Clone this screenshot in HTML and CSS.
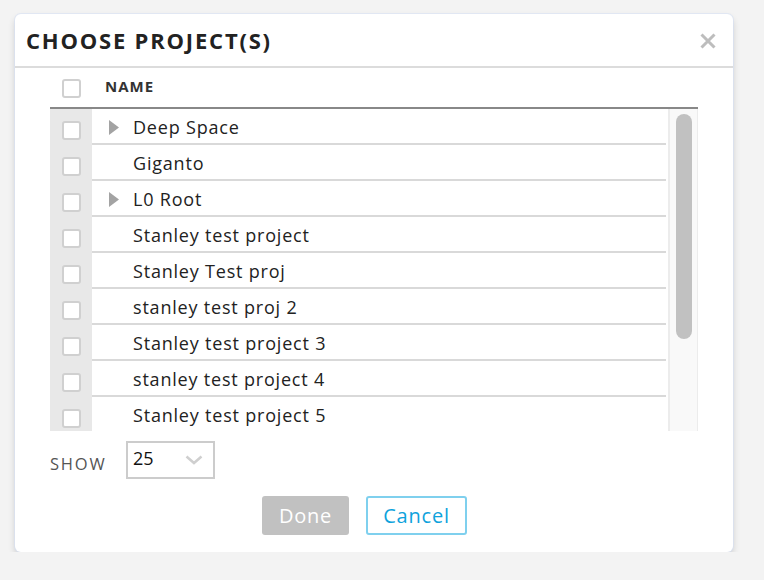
FILE: index.html
```html
<!DOCTYPE html>
<html>
<head>
<meta charset="utf-8">
<link rel="stylesheet" href="styles.css">
</head>
<body>
<div class="dialog">
  <div class="dlg-head">
    <h1 class="dlg-title">CHOOSE PROJECT(S)</h1>
    <span class="dlg-close"><svg width="16" height="16" viewBox="0 0 16 16"><path d="M1.5 1.5 L14.5 14.5 M14.5 1.5 L1.5 14.5" stroke="#bdbdbd" stroke-width="3"/></svg></span>
  </div>
  <div class="dlg-body">
    <div class="thead">
      <div class="col-check"><span class="cb"></span></div>
      <div class="th-name">NAME</div>
    </div>
    <div class="scroller">
      <div class="rows">
        <div class="row"><div class="col-check"><span class="cb"></span></div><div class="name"><span class="toggle"><svg width="10" height="15" viewBox="0 0 10 15"><path d="M0 0 L10 7.5 L0 15 Z" fill="#a3a3a3"/></svg></span>Deep Space</div></div>
        <div class="row"><div class="col-check"><span class="cb"></span></div><div class="name"><span class="toggle"></span>Giganto</div></div>
        <div class="row"><div class="col-check"><span class="cb"></span></div><div class="name"><span class="toggle"><svg width="10" height="15" viewBox="0 0 10 15"><path d="M0 0 L10 7.5 L0 15 Z" fill="#a3a3a3"/></svg></span>L0 Root</div></div>
        <div class="row"><div class="col-check"><span class="cb"></span></div><div class="name"><span class="toggle"></span>Stanley test project</div></div>
        <div class="row"><div class="col-check"><span class="cb"></span></div><div class="name"><span class="toggle"></span>Stanley Test proj</div></div>
        <div class="row"><div class="col-check"><span class="cb"></span></div><div class="name"><span class="toggle"></span>stanley test proj 2</div></div>
        <div class="row"><div class="col-check"><span class="cb"></span></div><div class="name"><span class="toggle"></span>Stanley test project 3</div></div>
        <div class="row"><div class="col-check"><span class="cb"></span></div><div class="name"><span class="toggle"></span>stanley test project 4</div></div>
        <div class="row"><div class="col-check"><span class="cb"></span></div><div class="name"><span class="toggle"></span>Stanley test project 5</div></div>
      </div>
      <div class="scrollbar"><div class="thumb"></div></div>
    </div>
    <div class="show">
      <span class="show-label">SHOW</span>
      <div class="select"><span class="select-val">25</span><svg class="chev" width="18" height="10" viewBox="0 0 18 10"><path d="M1.5 1.5 L9 8 L16.5 1.5" fill="none" stroke="#cfcfcf" stroke-width="2.5"/></svg></div>
    </div>
    <div class="actions">
      <button class="btn btn-done">Done</button>
      <button class="btn btn-cancel">Cancel</button>
    </div>
  </div>
</div>
</body>
</html>
```

FILE: styles.css
```css
html, body {
  margin: 0;
  background: #f3f3f3;
}
body {
  padding: 14px 0 0 15px;
  font-family: "Open Sans", "Liberation Sans", sans-serif;
}
.dialog {
  width: 718px;
  height: 538px;
  box-sizing: border-box;
  background: #fff;
  border-radius: 6px;
  box-shadow: 0 0 0 1px rgba(215, 225, 245, 0.6), 0 4px 7px rgba(0, 0, 0, 0.16);
  display: flex;
  flex-direction: column;
}
.dlg-head {
  height: 53px;
  border-bottom: 2px solid #dcdcdc;
  display: flex;
  align-items: center;
  justify-content: space-between;
  padding: 0 17px 0 11px;
}
.dlg-title {
  margin: 0;
  font-family: "Open Sans", sans-serif;
  font-weight: 700;
  font-size: 22px;
  letter-spacing: 1.8px;
  color: #222;
}
.dlg-close {
  display: flex;
  margin-top: 1px;
}
.dlg-body {
  padding: 0 35px 17px 35px;
  display: flex;
  flex-direction: column;
}
.thead {
  height: 39px;
  display: flex;
  align-items: center;
  border-bottom: 2px solid #888;
}
.col-check {
  width: 42px;
  flex: none;
  display: flex;
  justify-content: center;
}
.cb {
  width: 19px;
  height: 19px;
  box-sizing: border-box;
  border: 2px solid #d0d0d0;
  border-radius: 3px;
  background: #fff;
  margin-top: 2px;
}
.th-name {
  padding-left: 13px;
  font-weight: 700;
  font-size: 15px;
  letter-spacing: 1px;
  color: #333;
  margin-top: -4px;
}
.scroller {
  display: flex;
  height: 322px;
  overflow: hidden;
}
.rows {
  flex: 1;
  padding-right: 2px;
}
.row {
  display: flex;
  height: 36px;
}
.row .col-check {
  background: #e8e8e8;
  align-items: center;
}
.row .cb {
  margin-top: 6px;
}
.name {
  flex: 1;
  display: flex;
  align-items: center;
  padding-left: 17px;
  padding-top: 2px;
  border-bottom: 2px solid #d9d9d9;
  font-size: 18px;
  letter-spacing: 0.8px;
  color: #222;
}
.toggle {
  width: 24px;
  flex: none;
  display: flex;
  align-items: center;
  margin-top: 1px;
}
.scrollbar {
  width: 30px;
  box-sizing: border-box;
  background: #f9f9f9;
  border-left: 2px solid #ececec;
  border-right: 1px solid #ececec;
  padding: 5px 0 0 6px;
}
.thumb {
  width: 16px;
  height: 225px;
  border-radius: 8px;
  background: #c1c1c1;
}
.show {
  display: flex;
  align-items: center;
  margin-top: 10px;
}
.show-label {
  width: 76px;
  font-size: 16.5px;
  letter-spacing: 1.8px;
  color: #555;
  padding-top: 6px;
}
.select {
  width: 89px;
  height: 38px;
  box-sizing: border-box;
  border: 2px solid #cccccc;
  display: flex;
  align-items: center;
  justify-content: space-between;
  padding: 0 10px 0 5px;
  font-size: 18px;
  color: #111;
}
.select-val {
  line-height: 24px;
  margin-bottom: 4px;
}
.chev {
  flex: none;
}
.actions {
  display: flex;
  justify-content: center;
  gap: 17px;
  margin-top: 17px;
  padding-right: 19px;
}
.btn {
  height: 39px;
  box-sizing: border-box;
  border-radius: 3px;
  font-family: "Open Sans", sans-serif;
  font-size: 20px;
  letter-spacing: 0.8px;
  padding: 0;
}
.btn-done {
  width: 87px;
  background: #c1c1c1;
  color: #fff;
  border: none;
}
.btn-cancel {
  width: 101px;
  background: #fff;
  color: #0ea2dc;
  border: 2px solid #7fd0ee;
}
```
